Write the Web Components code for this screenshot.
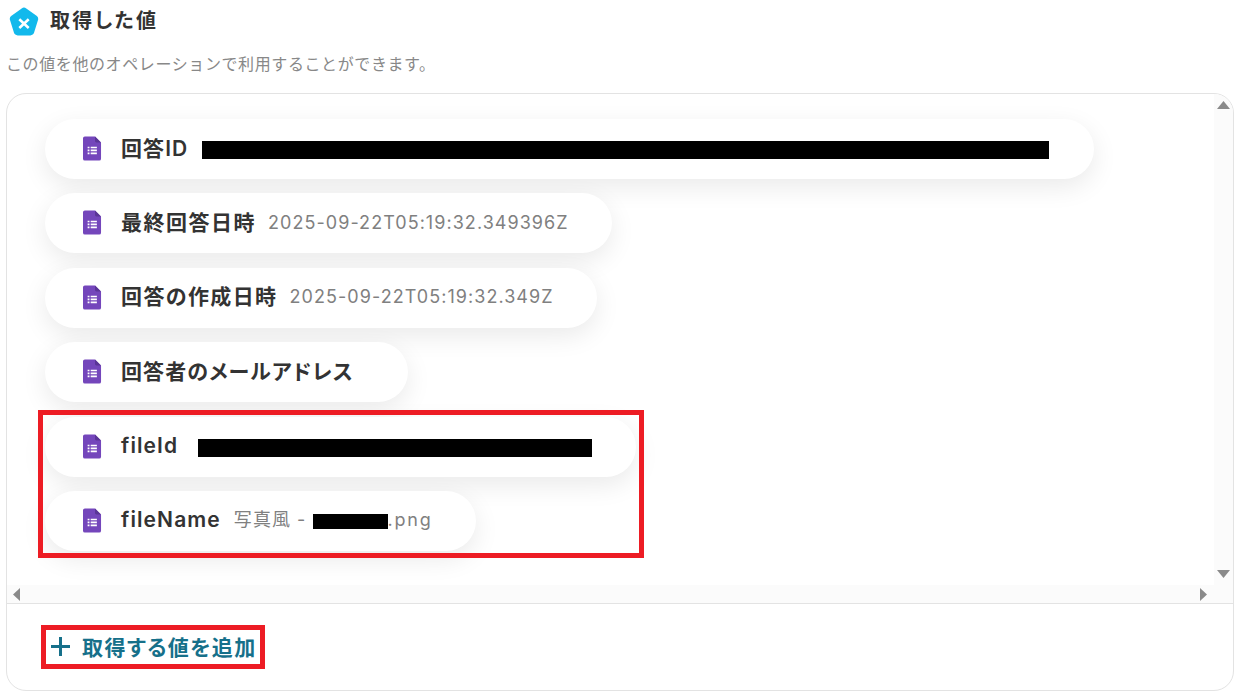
<!DOCTYPE html>
<html lang="ja">
<head>
<meta charset="utf-8">
<title>取得した値</title>
<style>
  html, body { margin: 0; height: 100%; background: #fff; overflow: hidden; }
  body { font-family: Inter, "Noto Sans CJK JP", sans-serif; }
</style>
</head>
<body>
<values-page>
  <values-panel>
    <value-chip label="回答ID" redact="847" gap="14" style="padding-right:46px"></value-chip>
    <value-chip label="最終回答日時" value="2025-09-22T05:19:32.349396Z" ls="1.5" gap="12"></value-chip>
    <value-chip label="回答の作成日時" value="2025-09-22T05:19:32.349Z" ls="1.4" gap="12"></value-chip>
    <value-chip label="回答者のメールアドレス" gap="10"></value-chip>
    <value-chip label="fileId" redact="394" gap="20" style="padding-right:45px"></value-chip>
    <value-chip label="fileName" value="写真風 - " redact="75" rh="15" suffix=".png"></value-chip>
  </values-panel>
</values-page>

<script>
// google forms icon, used in every chip
const formsIcon = `
<svg width="18.500" height="25" viewBox="0 0 20 27">
  <path d="M2 0.5H13L19.5 7V24.5a2 2 0 0 1-2 2H2a2 2 0 0 1-2-2V2.5a2 2 0 0 1 2-2z" fill="#7446bb"/>
  <path d="M13 0.5L19.5 7H14.5a1.500 1.500 0 0 1-1.500-1.500z" fill="#5a3596"/>
  <path d="M5 11.500h2v1.800H5zM5 14.700h2v1.800H5zM5 17.900h2v1.800H5zM8.300 11.500H15v1.800H8.300zM8.300 14.700H15v1.800H8.300zM8.300 17.900H15v1.800H8.300z" fill="#fff"/>
</svg>`;

customElements.define('values-page', class ValuesPage extends HTMLElement {
  constructor() {
    super();
    this.attachShadow({mode: 'open'}).innerHTML = `
    <style>
      :host { width: 1240px; height: 695px; box-sizing: border-box; padding: 7px 6px 4px; display: flex; flex-direction: column; font-feature-settings: "palt"; }
      .head { display: flex; align-items: center; gap: 11px; padding-left: 3px; height: 29px; }
      h1 { margin: 0; font-size: 20px; line-height: 29px; font-weight: 700; letter-spacing: 2.3px; color: #333; }
      p { margin: 14px 0 0; font-size: 16px; line-height: 28px; letter-spacing: 0.6px; color: #888; height: 28px; font-feature-settings: normal; }
      .body { flex: 1; margin-top: 15px; min-height: 0; display: flex; }
      ::slotted(*) { flex: 1; }
    </style>
    <div class="head">
      <svg width="30" height="30" viewBox="0 0 30 30">
        <path d="M12.700 1.400a4 4 0 0 1 4.600 0l10.200 7.300a4 4 0 0 1 1.500 4.400l-3.900 12.500a4 4 0 0 1-3.800 2.800H8.700a4 4 0 0 1-3.800-2.800L1 13.100a4 4 0 0 1 1.500-4.400z" fill="#12b9ec"/>
        <path d="M10.300 12.300L19.700 21M19.700 12.300L10.300 21" stroke="#fff" stroke-width="2.600" fill="none"/>
      </svg>
      <h1>取得した値</h1>
    </div>
    <p>この値を他のオペレーションで利用することができます。</p>
    <div class="body"><slot></slot></div>`;
  }
});

customElements.define('value-chip', class ValueChip extends HTMLElement {
  constructor() {
    super();
    this.attachShadow({mode: 'open'});
  }

  connectedCallback() {
    const label = this.getAttribute('label');
    const value = this.getAttribute('value') || '';
    const suffix = this.getAttribute('suffix') || '';
    const redact = this.getAttribute('redact');
    const rh = this.getAttribute('rh') || 18;
    const gap = this.getAttribute('gap');
    const ls = this.getAttribute('ls') || 1.1;
    this.shadowRoot.innerHTML = `
    <style>
      :host { display: flex; align-self: flex-start; align-items: center; height: 60px; box-sizing: border-box;
        padding: 0 44px 0 38px; background: #fff; border-radius: 30px; box-shadow: 0 8px 26px rgba(0,0,0,.085); }
      svg { flex: none; margin: -1px 19.500px 0 0; }
      b { font-size: 21px; line-height: 30px; font-weight: 600; letter-spacing: ${ls}px; color: #333; white-space: pre; margin-top: -1px; }
      span { display: flex; align-items: center; margin-left: 13px; font-size: 18px; line-height: 30px; letter-spacing: 1.05px; color: #808080; white-space: pre; margin-top: -1px; }
      i { display: block; background: #000; margin-top: 3px; }
      em { font-style: normal; letter-spacing: 1.800px; margin-right: -1px; }
    </style>
    ${formsIcon}
    <b>${label}</b>
    <span style="${gap ? 'margin-left:' + gap + 'px' : ''}">${value}${redact ? `<i style="width:${redact}px;height:${rh}px"></i>` : ''}<em>${suffix}</em></span>`;
  }
});

customElements.define('scroll-arrow', class ScrollArrow extends HTMLElement {
  constructor() {
    super();
    this.attachShadow({mode: 'open'});
  }

  connectedCallback() {
    const points = {
      up: '6.500,0 13,8 0,8',
      down: '0,0 13,0 6.500,8',
      left: '7,0 7,13 0,6.500',
      right: '0,0 7,6.500 0,13'
    }[this.getAttribute('dir')];
    const wide = this.getAttribute('dir') === 'up' || this.getAttribute('dir') === 'down';
    this.shadowRoot.innerHTML = `
    <style>:host { display: block; line-height: 0; }</style>
    <svg width="${wide ? 13 : 7}" height="${wide ? 8 : 13}"><polygon points="${points}" fill="#8a8a8a"/></svg>`;
  }
});

customElements.define('add-value-button', class AddValueButton extends HTMLElement {
  constructor() {
    super();
    this.attachShadow({mode: 'open'}).innerHTML = `
    <style>
      :host { display: inline-flex; align-items: center; gap: 11px; font-size: 21px; font-weight: 700; letter-spacing: 1.4px; color: #16708a; }
      svg { flex: none; }
    </style>
    <svg width="21" height="21" viewBox="0 0 21 21"><path d="M10.500 1v19M1 10.500h19" stroke="#16708a" stroke-width="3" fill="none"/></svg>
    <span>取得する値を追加</span>`;
  }
});

customElements.define('values-panel', class ValuesPanel extends HTMLElement {
  constructor() {
    super();
    this.attachShadow({mode: 'open'}).innerHTML = `
    <style>
      :host { display: block; height: 598px; position: relative; }
      .card { height: 100%; box-sizing: border-box; border: 1px solid #e3e3e3; border-radius: 20px; overflow: hidden; display: flex; flex-direction: column; }
      .view { flex: none; height: 510px; display: grid; grid-template-columns: 1fr 19px; grid-template-rows: 1fr 19px; }
      .list { overflow: hidden; display: flex; flex-direction: column; gap: 14.4px; padding: 25px 0 0 38px; min-height: 0; }
      .vbar { background: #fbfbfb; display: flex; flex-direction: column; justify-content: space-between; align-items: center; padding: 7px 0 7px; }
      .hbar { grid-column: 1 / 3; background: #fbfbfb; border-bottom: 1px solid #e3e3e3; display: flex; justify-content: space-between; align-items: center; padding: 0 26px 0 6px; }
      .foot { flex: 1; display: flex; align-items: center; padding: 0 0 2px 43px; }
      .mark { position: absolute; box-sizing: border-box; border: 5px solid #ed1c24; pointer-events: none; }
      .m1 { left: 32px; top: 317px; width: 606px; height: 148px; }
      .m2 { left: 35px; top: 532px; width: 224px; height: 44px; }
    </style>
    <div class="card">
      <div class="view">
        <div class="list"><slot></slot></div>
        <div class="vbar"><scroll-arrow dir="up"></scroll-arrow><scroll-arrow dir="down"></scroll-arrow></div>
        <div class="hbar"><scroll-arrow dir="left"></scroll-arrow><scroll-arrow dir="right"></scroll-arrow></div>
      </div>
      <div class="foot"><add-value-button></add-value-button></div>
    </div>
    <div class="mark m1"></div>
    <div class="mark m2"></div>`;
  }
});
</script>
</body>
</html>
